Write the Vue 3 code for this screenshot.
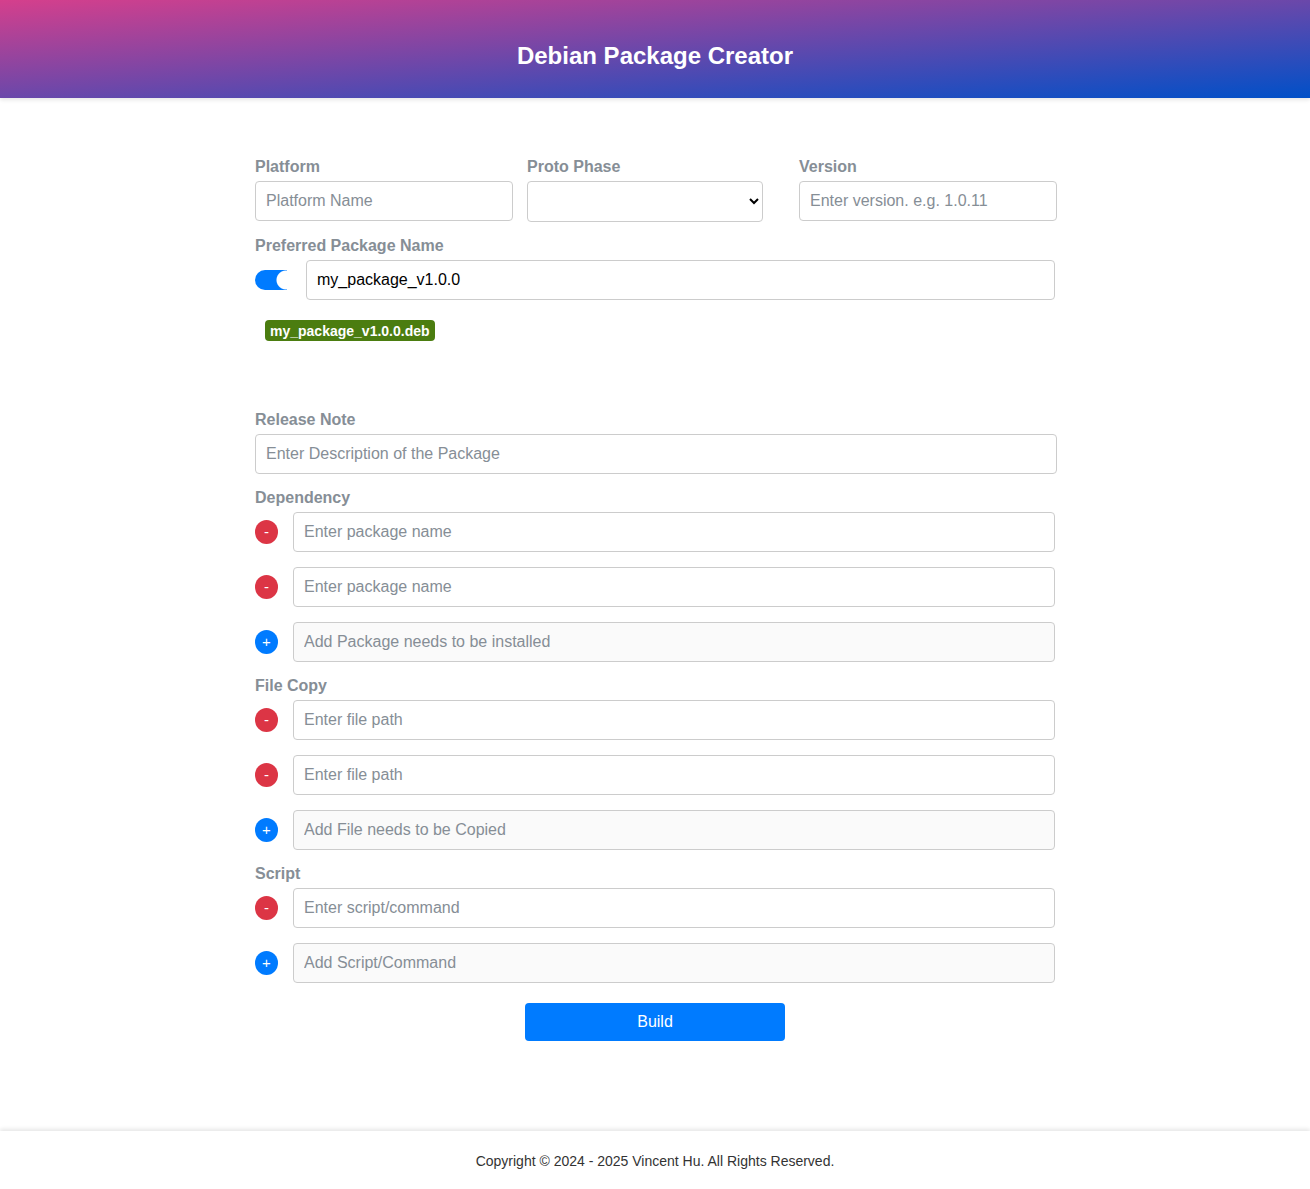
<script setup>
import { ref, reactive } from 'vue'

const platform = ref('')
const phase = ref('')
const version = ref('')
const preferred = ref(true)
const packageName = ref('my_package_v1.0.0')
const note = ref('')

const sections = reactive([
  {
    title: 'Dependency',
    placeholder: 'Enter package name',
    addPlaceholder: 'Add Package needs to be installed',
    items: ['', ''],
  },
  {
    title: 'File Copy',
    placeholder: 'Enter file path',
    addPlaceholder: 'Add File needs to be Copied',
    items: ['', ''],
  },
  {
    title: 'Script',
    placeholder: 'Enter script/command',
    addPlaceholder: 'Add Script/Command',
    items: [''],
  },
])
</script>

<template>
  <div class="page">
    <header class="header">
      <h1>Debian Package Creator</h1>
    </header>

    <main class="main">
      <form class="form" @submit.prevent>
        <div class="columns wide">
          <div class="group">
            <label for="platform">Platform</label>
            <input id="platform" v-model="platform" class="control" type="text" placeholder="Platform Name" />
          </div>
          <div class="group">
            <label for="phase">Proto Phase</label>
            <select id="phase" v-model="phase" class="control phase">
              <option value=""></option>
            </select>
          </div>
          <div class="group">
            <label for="version">Version</label>
            <input id="version" v-model="version" class="control" type="text" placeholder="Enter version. e.g. 1.0.11" />
          </div>
        </div>

        <div class="group">
          <label for="package-name">Preferred Package Name</label>
          <div class="row toggle-row">
            <input v-model="preferred" class="switch" type="checkbox" aria-label="Preferred Package Name" />
            <input id="package-name" v-model="packageName" class="control" type="text" />
          </div>
          <output class="badge" for="package-name">{{ packageName }}.deb</output>
        </div>

        <div class="group wide note">
          <label for="note">Release Note</label>
          <input id="note" v-model="note" class="control" type="text" placeholder="Enter Description of the Package" />
        </div>

        <fieldset v-for="section in sections" :key="section.title" class="group">
          <legend>{{ section.title }}</legend>
          <div class="list">
            <div v-for="(item, i) in section.items" :key="i" class="row">
              <button class="round remove" type="button" @click="section.items.splice(i, 1)">-</button>
              <input v-model="section.items[i]" class="control" type="text" :aria-label="section.title" :placeholder="section.placeholder" />
            </div>
            <div class="row">
              <button class="round add" type="button" @click="section.items.push('')">+</button>
              <input class="control" type="text" disabled :aria-label="section.addPlaceholder" :placeholder="section.addPlaceholder" />
            </div>
          </div>
        </fieldset>

        <button class="build" type="submit">Build</button>
      </form>
    </main>

    <footer class="footer">
      <p>Copyright © 2024 - 2025 Vincent Hu. All Rights Reserved.</p>
    </footer>
  </div>
</template>

<style>
body {
  margin: 0;
  background: #fff;
}
</style>

<style scoped>
.page {
  display: flex;
  flex-direction: column;
  min-height: 100vh;
  font-family: Arial, "Liberation Sans", sans-serif;
  font-size: 16px;
  line-height: 18px;
}

.page *,
.page {
  box-sizing: border-box;
}

.header {
  padding: 42px 20px 28px;
  background: linear-gradient(to bottom right, #d53f8c, #0050c8);
  box-shadow: 0 2px 4px rgba(0, 0, 0, 0.1);
  text-align: center;
}

h1 {
  margin: 0;
  color: #fff;
  font-size: 24px;
  line-height: 28px;
}

.main {
  flex: 1;
  padding: 60px 20px 88px;
}

.form {
  display: flex;
  flex-direction: column;
  gap: 15px;
  max-width: 800px;
  margin: 0 auto;
}

.wide {
  width: calc(100% + 2px);
}

.columns {
  display: grid;
  grid-template-columns: repeat(3, 1fr);
  gap: 14px;
}

.group {
  display: flex;
  flex-direction: column;
  min-width: 0;
  margin: 0;
  padding: 0;
  border: 0;
}

label,
legend {
  display: block;
  margin-bottom: 5px;
  padding: 0;
  color: #868e96;
  font-weight: bold;
}

.control {
  width: 100%;
  min-width: 0;
  height: 40px;
  padding: 10px;
  border: 1px solid #ccc;
  border-radius: 4px;
  background: #fff;
  color: #000;
  font: inherit;
}

.control::placeholder {
  color: #868e96;
  opacity: 1;
}

.control:disabled {
  background: #fafafa;
}

.phase {
  width: 236px;
  max-width: 100%;
  height: 41px;
}

.row {
  display: flex;
  align-items: center;
  gap: 15px;
}

.toggle-row {
  gap: 19px;
}

.list {
  display: flex;
  flex-direction: column;
  gap: 15px;
}

.switch {
  flex: none;
  appearance: none;
  width: 32px;
  height: 20px;
  margin: 0;
  border-radius: 0 10px 10px 0;
  background: radial-gradient(circle at 1px 10px, #fff 9px, #ccc 10px);
}

.switch:checked {
  border-radius: 10px 0 0 10px;
  background: radial-gradient(circle at 31px 10px, #fff 9px, #007bff 10px);
}

.badge {
  align-self: flex-start;
  margin: 20px 10px 0;
  padding: 3px 5px 2px;
  border-radius: 4px;
  background: #4b7d10;
  color: #fff;
  font-size: 14px;
  font-weight: bold;
  line-height: 16px;
}

.note {
  margin-top: 55px;
}

.round {
  flex: none;
  width: 23px;
  height: 24px;
  padding: 0;
  border: 0;
  border-radius: 50%;
  color: #fff;
  font: inherit;
  font-size: 15px;
  cursor: pointer;
}

.remove {
  background: #dc3545;
}

.add {
  background: #007bff;
}

.build {
  align-self: center;
  width: 260px;
  max-width: 100%;
  margin-top: 5px;
  padding: 10px;
  border: 0;
  border-radius: 4px;
  background: #007bff;
  color: #fff;
  font: inherit;
  cursor: pointer;
}

.footer {
  padding: 22px 20px 20px;
  background: #fff;
  box-shadow: 0 -2px 4px rgba(0, 0, 0, 0.1);
  color: #333;
  font-size: 14px;
  line-height: 16px;
  text-align: center;
}

.footer p {
  margin: 0;
}
</style>
